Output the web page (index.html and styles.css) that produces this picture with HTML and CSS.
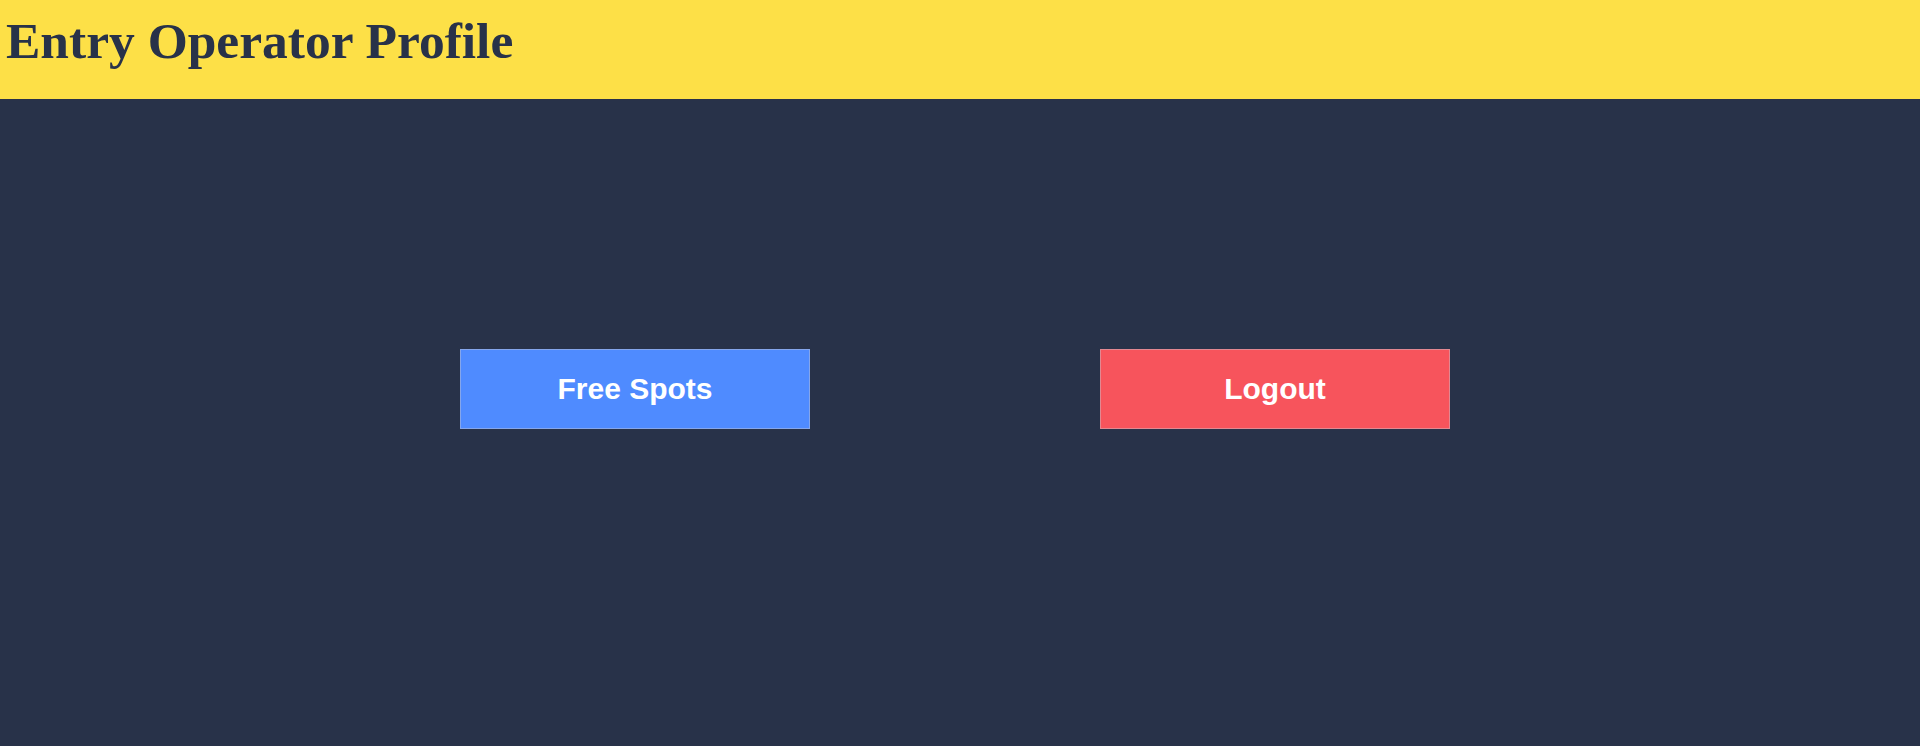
FILE: index.html
```html
<!DOCTYPE html>
<html lang="en">
<head>
<meta charset="utf-8">
<title>Entry Operator Profile</title>
<link rel="stylesheet" href="styles.css">
</head>
<body>
<header class="topbar">
  <h1 class="title">Entry Operator Profile</h1>
</header>
<main class="actions">
  <button class="btn btn-blue">Free Spots</button>
  <button class="btn btn-red">Logout</button>
</main>
</body>
</html>
```
FILE: styles.css
```css
html, body {
  margin: 0;
  padding: 0;
  height: 100%;
}
body {
  background: #283249;
  display: flex;
  flex-direction: column;
}
.topbar {
  background: #fde047;
  height: 99px;
  box-sizing: border-box;
  padding: 9px 0 0 6px;
}
.title {
  margin: 0;
  font-family: "Liberation Serif", "Times New Roman", serif;
  font-weight: bold;
  font-size: 51.5px;
  line-height: 64px;
  color: #283249;
}
.actions {
  flex: 1;
  display: flex;
  align-items: flex-start;
  padding: 250px 0 0 460px;
  gap: 290px;
}
.btn {
  width: 350px;
  height: 80px;
  box-sizing: border-box;
  border: 1px solid rgba(200, 200, 210, 0.45);
  font-family: "Liberation Sans", Arial, sans-serif;
  font-weight: bold;
  font-size: 30px;
  color: #ffffff;
  padding: 0;
  cursor: pointer;
}
.btn-blue {
  background: #4f8bff;
}
.btn-red {
  background: #f7545c;
}
```
